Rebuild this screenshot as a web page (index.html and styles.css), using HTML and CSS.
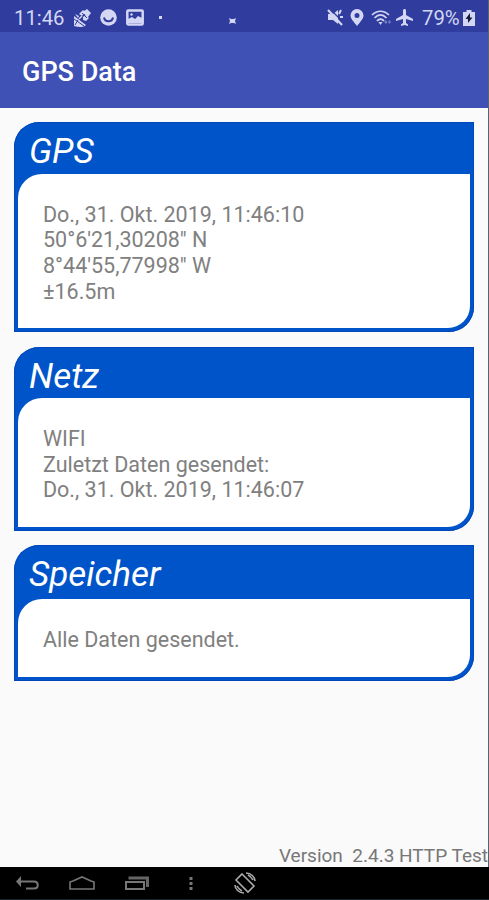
FILE: index.html
```html
<!doctype html>
<html lang="de">
  <head>
    <meta charset="utf-8">
    <meta name="viewport" content="width=device-width, initial-scale=1">
    <title>GPS Data</title>
    <link rel="stylesheet" href="styles.css">
  </head>
  <body>
    <div class="screen">
      <div class="statusbar">
        <span class="clock">11:46</span>
        <svg class="satellite" width="18" height="18" viewBox="0 0 18 18">
          <path d="M5 5l4-4 2 2-3 4zM10 2l3-2 4 4-3 4-5-4zM9 8l3-2 3 3-3 3-3-1z"/>
          <path d="M0 7l12 9c-3 3-8 2-12 1zM1 5l4 2-1 2z"/>
          <path d="M0 10l10 7M4 11l-3 5M8 4l5 5" fill="none" stroke="#303c9e" stroke-width="1"/>
          <path d="M5 10l3-3" fill="none" stroke="#d3d7f3" stroke-width="1.500"/>
        </svg>
        <svg class="smiley" width="17" height="17" viewBox="0 0 17 17">
          <circle cx="8.500" cy="8.500" r="8.300"/>
          <path d="M4 8.500c1 5 8 5 9 0" fill="none" stroke="#303c9e" stroke-width="2"/>
        </svg>
        <svg class="picture" width="18" height="17" viewBox="0 0 18 17">
          <rect x="1.300" y="1.500" width="15.400" height="14" rx="1" fill="none" stroke="#d3d7f3" stroke-width="2.500"/>
          <path d="M2 14v-4l4-2 3 2 3-3 4 2v5z"/>
          <circle cx="5.500" cy="5.500" r="1.200"/>
        </svg>
        <span class="dot"></span>
        <svg class="camera" width="7" height="6" viewBox="0 0 7 6">
          <path d="M0 0l2 1h3l2-1-1 3 1 3-2-1H2L0 6l1-3z"/>
        </svg>
        <svg class="mute" width="17" height="17" viewBox="0 0 17 17">
          <path d="M1 5h5l5-4v14l-5-4H1z"/>
          <path d="M12 5l2-4M13 8h3" fill="none" stroke="#d3d7f3" stroke-width="2"/>
          <path d="M3 0l14 14" fill="none" stroke="#303c9e" stroke-width="1.300"/>
          <path d="M1 1l14 15" fill="none" stroke="#d3d7f3" stroke-width="2.200"/>
        </svg>
        <svg class="pin" width="14" height="17" viewBox="0 0 14 17">
          <path fill-rule="evenodd" d="M7 0a6.500 6.500 0 0 0-6.500 6.500C.5 10 4 13 7 17c3-4 6.500-7 6.500-10.500A6.500 6.500 0 0 0 7 0zm0 4a2.500 2.500 0 1 1 0 5 2.500 2.500 0 0 1 0-5z"/>
        </svg>
        <svg class="wifi" width="20" height="16" viewBox="0 0 20 16">
          <path d="M1 5c5-5 12-5 17 0M3.500 8c4-4 8-4 12 0M6 11c2-2.500 5-2.500 7 0" fill="none" stroke="#d3d7f3" stroke-width="1.700"/>
          <path d="M7.500 12h4l-2 3z"/>
          <path d="M13 12l2-2 1.500 2L15 14zM17 12l1.500-2 1.500 2-1.500 2z" opacity=".4"/>
        </svg>
        <svg class="plane" width="17" height="17" viewBox="0 0 17 17">
          <path d="M7 1.500c0-2 3-2 3 0V6l7 4v2l-7-2v4l2 1.500V17l-3.500-1L5 17v-1.500L7 14v-4l-7 2v-2l7-4z"/>
        </svg>
        <span class="percent">79%</span>
        <svg class="battery" width="12" height="16" viewBox="0 0 12 16">
          <path d="M3.500 0h5v2H12v14H0V2h3.500z"/>
          <path d="M7 3L2.500 9H5v4l4.500-5.500H7z" fill="#171c3d"/>
        </svg>
      </div>

      <header class="toolbar">GPS Data</header>

      <main>
        <section class="card">
          <h2>GPS</h2>
          <div class="content">
            Do., 31. Okt. 2019, 11:46:10<br>
            50°6'21,30208" N<br>
            8°44'55,77998" W<br>
            ±16.5m
          </div>
        </section>
        <section class="card">
          <h2>Netz</h2>
          <div class="content">
            WIFI<br>
            Zuletzt Daten gesendet:<br>
            Do., 31. Okt. 2019, 11:46:07
          </div>
        </section>
        <section class="card storage">
          <h2>Speicher</h2>
          <div class="content">Alle Daten gesendet.</div>
        </section>
      </main>

      <footer>Version&nbsp; 2.4.3 HTTP Test</footer>
    </div>

    <nav>
      <svg class="back" width="24" height="14" viewBox="0 0 24 14">
        <path d="M3 5.500h15c5 0 5 7 0 7H10" fill="none" stroke="#777" stroke-width="2"/>
        <path d="M0 5.500L5 0v11z" fill="#777"/>
      </svg>
      <svg class="home" width="26" height="14" viewBox="0 0 26 14">
        <path d="M1 13V6l3-1 9-4 9 4 3 1v7z" fill="none" stroke="#777" stroke-width="1.600"/>
      </svg>
      <svg class="recent" width="24" height="14" viewBox="0 0 24 14">
        <path d="M1 6h18v7H1z" fill="none" stroke="#777" stroke-width="2"/>
        <path d="M5 3.500V2h17.500v9" fill="none" stroke="#666" stroke-width="3"/>
      </svg>
      <svg class="more" width="4" height="13" viewBox="0 0 4 13">
        <path d="M.5 0h3v3h-3zM.5 5h3v3h-3zM.5 10h3v3h-3z" fill="#777"/>
      </svg>
      <svg class="rotate" width="22" height="22" viewBox="0 0 22 22" fill="none" stroke="#aaa" stroke-width="1.600">
        <path d="M8 2l12 12-6 6L2 8z"/>
        <path d="M12 1c5 0 9 4 9 8M14 3c2 1 4 3 5 5M10 21c-5 0-9-4-9-8M8 19c-2-1-4-3-5-5"/>
      </svg>
    </nav>
  </body>
</html>
```
FILE: styles.css
```css
html, body { margin: 0; padding: 0; height: 100%; overflow: hidden; }
body {
  display: flex;
  flex-direction: column;
  background-color: #000;
  font-family: Roboto, "Liberation Sans", sans-serif;
}
svg { display: block; flex: none; }

.screen {
  box-sizing: border-box;
  height: 867px;
  display: flex;
  flex-direction: column;
  background-color: #fafafa;
  border-right: 1px solid #59636f;
}

.statusbar {
  height: 32px;
  padding-top: 3px;
  box-sizing: border-box;
  display: flex;
  align-items: center;
  background-color: #303c9e;
  color: #d3d7f3;
  fill: #d3d7f3;
  font-size: 20.300px;
}
.clock { width: 60px; padding-left: 14px; }
.smiley { margin-left: 8px; }
.picture { margin-left: 9px; }
.dot { width: 3px; height: 3px; margin-left: 15px; background-color: #d3d7f3; }
.camera { margin: 6px 0 0 67px; }
.mute { margin-left: 91px; }
.pin { margin-left: 6px; }
.wifi { margin-left: 7px; }
.plane { margin-left: 5px; }
.percent { width: 38px; margin-left: 9px; }
.battery { margin-left: 3px; }

.toolbar {
  height: 76px;
  box-sizing: border-box;
  padding: 4px 0 0 22px;
  line-height: 72px;
  background-color: #3f51b5;
  color: #fff;
  font-size: 27px;
  font-weight: 500;
}

main {
  flex: 1;
  display: flex;
  flex-direction: column;
  gap: 14.500px;
  padding: 14px 14px 0;
}
.card {
  height: 210px;
  box-sizing: border-box;
  display: flex;
  flex-direction: column;
  padding: 0 4px 4px;
  background-color: #0054ca;
  box-shadow: inset 0 0 0 1px #0046bd;
  border-radius: 25px 0 25px 0;
}
.card:nth-child(2) { height: 184px; }
.card.storage { height: 136px; }
.card h2 {
  height: 51.500px;
  flex: none;
  margin: 0;
  padding-left: 11px;
  line-height: 60px;
  color: #fff;
  font-size: 35px;
  font-style: italic;
  font-weight: 400;
}
.card.storage h2 { height: 54px; }
.content {
  flex: 1;
  padding: 28px 0 0 25px;
  background-color: #fff;
  border-radius: 24px 0 22px 0;
  color: #808080;
  font-size: 21.500px;
  line-height: 25.700px;
}

footer {
  padding-top: 2px;
  color: #777;
  font-size: 19px;
  line-height: 22px;
  text-align: right;
  white-space: nowrap;
}

nav {
  flex: 1;
  display: flex;
  align-items: center;
  background-color: #000;
  border-bottom: 1px solid #17232a;
}
.back { margin-left: 16px; }
.home { margin-left: 29px; }
.recent { margin-left: 30px; }
.more { margin-left: 40px; }
.rotate { margin-left: 41px; }
```
